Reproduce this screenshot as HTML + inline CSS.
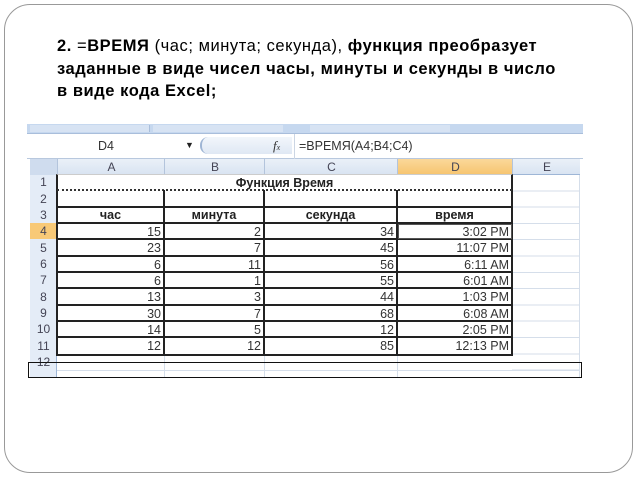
<!DOCTYPE html>
<html><head><meta charset="utf-8"><style>
body{margin:0;width:640px;height:480px;background:#fff;position:relative;overflow:hidden;font-family:"Liberation Sans",Arial,sans-serif;}
.frame{position:absolute;left:4px;top:4px;width:629px;height:469px;border:1.5px solid #999;border-radius:26px;box-sizing:border-box;}
.t{position:absolute;left:57px;font-size:16.5px;letter-spacing:0.55px;font-weight:bold;color:#000;white-space:nowrap;line-height:20px;}
.n{font-weight:normal;}
.a{position:absolute;box-sizing:border-box;}
.c{position:absolute;font-size:12.5px;color:#333;line-height:16px;white-space:nowrap;}
.r{text-align:right;}
.h{position:absolute;font-size:12px;color:#445;text-align:center;line-height:16px;}
</style></head><body>
<div class="frame"></div>
<div class="t" style="top:36px">2. <span class="n">=</span>ВРЕМЯ <span class="n">(час; минута; секунда),</span> функция преобразует</div>
<div class="t" style="top:59px">заданные в виде чисел часы, минуты и секунды в число</div>
<div class="t" style="top:81px">в виде кода Excel;</div>

<div class="a" style="left:27px;top:124px;width:556px;height:10px;background:#c6d8ef;"></div>
<div class="a" style="left:30px;top:125px;width:120px;height:7px;background:#d7e3f3;border-right:1px solid #a9bedb;"></div>
<div class="a" style="left:153px;top:125px;width:130px;height:7px;background:#d7e3f3;"></div>
<div class="a" style="left:310px;top:125px;width:140px;height:7px;background:#d7e3f3;"></div>
<div class="a" style="left:27px;top:133px;width:556px;height:1px;background:#a9bedb;"></div>
<div class="a" style="left:27px;top:134px;width:556px;height:25px;background:#fff;border-bottom:1px solid #b8c8de;"></div>
<div class="c" style="left:98px;top:138px;color:#333;">D4</div>
<div class="c" style="left:185px;top:137px;font-size:9px;color:#222;">▼</div>
<div class="a" style="left:200px;top:137px;width:92px;height:17px;background:linear-gradient(#f2f6fb,#dfe8f4);border-radius:8px 0 0 8px;border-left:2px solid #9fb5d4;"></div>
<div class="c" style="left:273px;top:138px;font-style:italic;font-family:'Liberation Serif',serif;font-size:13px;color:#333;">f<span style="font-size:8px">x</span></div>
<div class="a" style="left:294px;top:134px;width:1px;height:25px;background:#ccd6e4;"></div>
<div class="c" style="left:299px;top:138px;color:#333;">=ВРЕМЯ(A4;B4;C4)</div>
<div class="a" style="left:30px;top:159px;width:550px;height:16px;background:linear-gradient(#eaf0f8,#d9e4f2);border-bottom:1px solid #9eb6d6;"></div>
<div class="a" style="left:397px;top:159px;width:115px;height:16px;background:linear-gradient(#fbd89a,#f6c46e);"></div>
<div class="a" style="left:30px;top:159px;width:27px;height:16px;background:#cfdcee;"></div>
<div class="h" style="left:57px;top:159px;width:107px;border-left:1px solid #b3c4dc;">A</div>
<div class="h" style="left:164px;top:159px;width:100px;border-left:1px solid #b3c4dc;">B</div>
<div class="h" style="left:264px;top:159px;width:133px;border-left:1px solid #b3c4dc;">C</div>
<div class="h" style="left:397px;top:159px;width:115px;border-left:1px solid #b3c4dc;">D</div>
<div class="h" style="left:512px;top:159px;width:68px;border-left:1px solid #b3c4dc;">E</div>
<div class="a" style="left:30px;top:175px;width:27px;height:203px;background:#e4ecf7;border-right:1px solid #9eb6d6;"></div>
<div class="a" style="left:30px;top:223px;width:27px;height:16px;background:#f8c977;"></div>
<div class="h" style="left:30px;top:174px;width:27px">1</div>
<div class="h" style="left:30px;top:191px;width:27px">2</div>
<div class="h" style="left:30px;top:207px;width:27px">3</div>
<div class="h" style="left:30px;top:223px;width:27px">4</div>
<div class="h" style="left:30px;top:240px;width:27px">5</div>
<div class="h" style="left:30px;top:256px;width:27px">6</div>
<div class="h" style="left:30px;top:272px;width:27px">7</div>
<div class="h" style="left:30px;top:289px;width:27px">8</div>
<div class="h" style="left:30px;top:305px;width:27px">9</div>
<div class="h" style="left:30px;top:321px;width:27px">10</div>
<div class="h" style="left:30px;top:338px;width:27px">11</div>
<div class="h" style="left:30px;top:354px;width:27px">12</div>
<div class="a" style="left:512px;top:175px;width:68px;height:203px;background:repeating-linear-gradient(#fff 0,#fff 15.3px,#d5deea 15.3px,#d5deea 16.3px);border-right:1px solid #d5deea;"></div>
<div class="a" style="left:164px;top:355px;width:1px;height:22px;background:#d5deea;"></div>
<div class="a" style="left:264px;top:355px;width:1px;height:22px;background:#d5deea;"></div>
<div class="a" style="left:397px;top:355px;width:1px;height:22px;background:#d5deea;"></div>
<div class="a" style="left:57px;top:370px;width:523px;height:1px;background:#d5deea;"></div>
<div class="a" style="left:56px;top:174px;width:457px;height:182px;border:2px solid #222;border-top:1px solid #ccc;"></div>
<div class="a" style="left:57px;top:189px;width:455px;height:0;border-top:2px dotted #333;"></div>
<div class="a" style="left:163px;top:190px;width:2px;height:165px;background:#222;"></div>
<div class="a" style="left:263px;top:190px;width:2px;height:165px;background:#222;"></div>
<div class="a" style="left:396px;top:190px;width:2px;height:165px;background:#222;"></div>
<div class="a" style="left:57px;top:206px;width:455px;height:2px;background:#222;"></div>
<div class="a" style="left:57px;top:222px;width:455px;height:2px;background:#222;"></div>
<div class="a" style="left:57px;top:238px;width:455px;height:2px;background:#222;"></div>
<div class="a" style="left:57px;top:255px;width:455px;height:2px;background:#222;"></div>
<div class="a" style="left:57px;top:271px;width:455px;height:2px;background:#222;"></div>
<div class="a" style="left:57px;top:287px;width:455px;height:2px;background:#222;"></div>
<div class="a" style="left:57px;top:304px;width:455px;height:2px;background:#222;"></div>
<div class="a" style="left:57px;top:320px;width:455px;height:2px;background:#222;"></div>
<div class="a" style="left:57px;top:336px;width:455px;height:2px;background:#222;"></div>
<div class="a" style="left:398px;top:224px;width:114px;height:15px;border:1px solid #555;"></div>
<div class="c" style="left:57px;top:175px;width:455px;text-align:center;font-weight:bold;color:#222;">Функция Время</div>
<div class="c" style="left:57px;top:207px;width:107px;text-align:center;font-weight:bold;color:#222;">час</div>
<div class="c" style="left:164px;top:207px;width:100px;text-align:center;font-weight:bold;color:#222;">минута</div>
<div class="c" style="left:264px;top:207px;width:133px;text-align:center;font-weight:bold;color:#222;">секунда</div>
<div class="c" style="left:397px;top:207px;width:115px;text-align:center;font-weight:bold;color:#222;">время</div>

<div class="c r" style="left:57px;top:224px;width:104px">15</div><div class="c r" style="left:164px;top:224px;width:97px">2</div><div class="c r" style="left:264px;top:224px;width:130px">34</div><div class="c r" style="left:397px;top:224px;width:112px">3:02 PM</div>
<div class="c r" style="left:57px;top:240px;width:104px">23</div><div class="c r" style="left:164px;top:240px;width:97px">7</div><div class="c r" style="left:264px;top:240px;width:130px">45</div><div class="c r" style="left:397px;top:240px;width:112px">11:07 PM</div>
<div class="c r" style="left:57px;top:257px;width:104px">6</div><div class="c r" style="left:164px;top:257px;width:97px">11</div><div class="c r" style="left:264px;top:257px;width:130px">56</div><div class="c r" style="left:397px;top:257px;width:112px">6:11 AM</div>
<div class="c r" style="left:57px;top:273px;width:104px">6</div><div class="c r" style="left:164px;top:273px;width:97px">1</div><div class="c r" style="left:264px;top:273px;width:130px">55</div><div class="c r" style="left:397px;top:273px;width:112px">6:01 AM</div>
<div class="c r" style="left:57px;top:289px;width:104px">13</div><div class="c r" style="left:164px;top:289px;width:97px">3</div><div class="c r" style="left:264px;top:289px;width:130px">44</div><div class="c r" style="left:397px;top:289px;width:112px">1:03 PM</div>
<div class="c r" style="left:57px;top:306px;width:104px">30</div><div class="c r" style="left:164px;top:306px;width:97px">7</div><div class="c r" style="left:264px;top:306px;width:130px">68</div><div class="c r" style="left:397px;top:306px;width:112px">6:08 AM</div>
<div class="c r" style="left:57px;top:322px;width:104px">14</div><div class="c r" style="left:164px;top:322px;width:97px">5</div><div class="c r" style="left:264px;top:322px;width:130px">12</div><div class="c r" style="left:397px;top:322px;width:112px">2:05 PM</div>
<div class="c r" style="left:57px;top:338px;width:104px">12</div><div class="c r" style="left:164px;top:338px;width:97px">12</div><div class="c r" style="left:264px;top:338px;width:130px">85</div><div class="c r" style="left:397px;top:338px;width:112px">12:13 PM</div>
<div class="a" style="left:28px;top:362px;width:554px;height:16px;border:1.5px solid #111;"></div>
</body></html>
